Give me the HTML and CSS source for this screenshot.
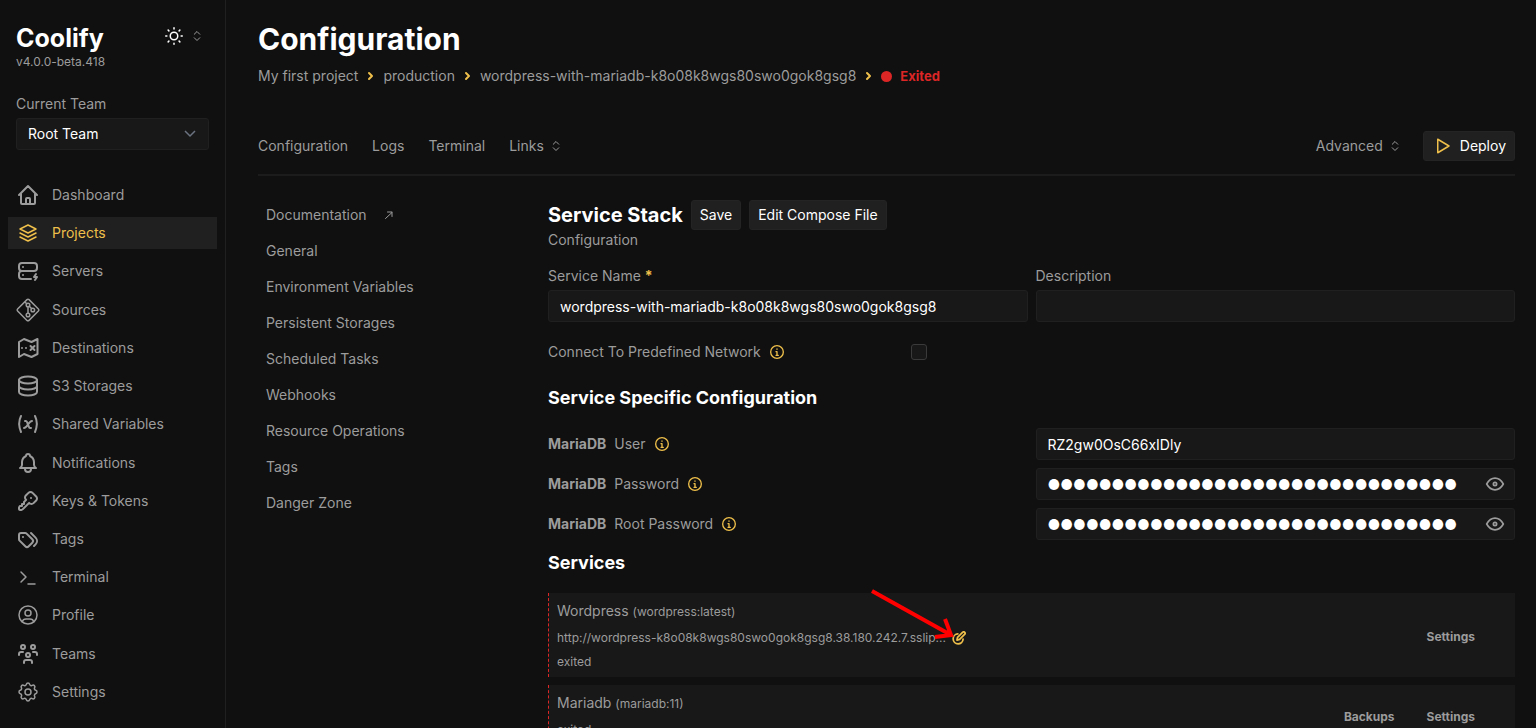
FILE: index.html
```
<!doctype html>
<html lang="en">
<head>
  <meta charset="UTF-8">
  <meta name="viewport" content="width=device-width, initial-scale=1.0">
  <title>Configuration | Coolify</title>
  <link rel="stylesheet" href="styles.css">
</head>
<body>

<svg class="sprite" aria-hidden="true">
  <symbol id="updown" viewBox="0 0 24 24"><path d="M6.500 15.500 12 21l5.500-5.500M6.500 8.500 12 3l5.500 5.500"/></symbol>
  <symbol id="info" viewBox="0 0 24 24"><circle cx="12" cy="12" r="9.500"/><path d="M12 7.500v.500M10.500 11.500H12V17M10.500 17h3.500"/></symbol>
  <symbol id="chevron" viewBox="0 0 9 10"><path d="M3 2 6 5 3 8"/></symbol>
  <symbol id="eye" viewBox="0 0 24 24"><circle cx="12" cy="12" r="2"/><path d="M22 12c-2.667 4.667-6 7-10 7s-7.333-2.333-10-7c2.667-4.667 6-7 10-7s7.333 2.333 10 7"/></symbol>
</svg>

<aside class="sidebar">
  <div class="sidebar-head">
    <div>
      <a href="#" class="brand">Coolify</a>
      <div class="version">v4.0.0-beta.418</div>
    </div>
    <button type="button" class="theme" aria-label="Theme">
      <svg class="icon icon-sun" viewBox="0 0 24 24"><circle cx="12" cy="12" r="5"/><path d="M12 1v1.500M12 21.500V23M1 12h1.500M21.500 12H23M4.200 4.200l1 1M18.800 18.800l1 1M4.200 19.800l1-1M18.800 5.200l1-1"/></svg>
      <svg class="icon icon-updown"><use href="#updown"/></svg>
    </button>
  </div>
  <label class="label" for="team">Current Team</label>
  <select class="select" id="team">
    <option>Root Team</option>
  </select>
  <nav class="menu">
    <a href="#" class="menu-item">
      <svg class="icon" viewBox="0 0 24 24"><path d="M3 12l2-2m0 0l7-7 7 7M5 10v10a1 1 0 001 1h3m10-11l2 2m-2-2v10a1 1 0 01-1 1h-3m-6 0a1 1 0 001-1v-4a1 1 0 011-1h2a1 1 0 011 1v4a1 1 0 001 1m-6 0h6"/></svg>
      Dashboard
    </a>
    <a href="#" class="menu-item is-active">
      <svg class="icon icon-thin" viewBox="0 0 24 24"><path d="M12 4L4 8l8 4l8-4zM4 12l8 4l8-4M4 16l8 4l8-4"/></svg>
      Projects
    </a>
    <a href="#" class="menu-item">
      <svg class="icon" viewBox="0 0 24 24"><path d="M3 7a3 3 0 0 1 3-3h12a3 3 0 0 1 3 3v2a3 3 0 0 1-3 3H6a3 3 0 0 1-3-3zM15 20H6a3 3 0 0 1-3-3v-2a3 3 0 0 1 3-3h12M7 8v.01M7 16v.01M20 15l-2 3h3l-2 3"/></svg>
      Servers
    </a>
    <a href="#" class="menu-item">
      <svg class="icon icon-thin" viewBox="0 0 24 24"><path d="M13 1.600l9.400 9.400a1.400 1.400 0 0 1 0 2L13 22.400a1.400 1.400 0 0 1-2 0L1.600 13a1.400 1.400 0 0 1 0-2L11 1.600a1.400 1.400 0 0 1 2 0zM12 9v6M9 4l1.700 1.700M13.300 8.300l2.200 2.200"/><circle cx="12" cy="7" r="1.800"/><circle cx="16.800" cy="12" r="1.800"/><circle cx="12" cy="17" r="1.800"/></svg>
      Sources
    </a>
    <a href="#" class="menu-item">
      <svg class="icon" viewBox="0 0 24 24"><path d="M3 6l5-3 7.500 3L21.500 3v15l-6 3L8 18l-5 3zM6 12v.01M10 12v.01M14.500 10l4 4M18.500 10l-4 4"/></svg>
      Destinations
    </a>
    <a href="#" class="menu-item">
      <svg class="icon" viewBox="0 0 24 24"><ellipse cx="12" cy="6" rx="9" ry="3.500"/><path d="M3 6v12c0 2 4 3.500 9 3.500s9-1.500 9-3.500V6M3 12c0 2 4 3.500 9 3.500s9-1.500 9-3.500"/></svg>
      S3 Storages
    </a>
    <a href="#" class="menu-item">
      <svg class="icon" viewBox="0 0 24 24"><path d="M5 4C2.500 9 2.500 14 5 20M19 4c2.500 5 2.500 10 0 16M9 9h1c1 0 1 1 2.016 3.527C13 15 13 16 14 16h1M8 16c1.500 0 3-2 4-3.500S14.500 9 16 9"/></svg>
      Shared Variables
    </a>
    <a href="#" class="menu-item">
      <svg class="icon" viewBox="0 0 24 24"><path d="M10 5a2 2 0 1 1 4 0a7 7 0 0 1 4 6v3a4 4 0 0 0 2 3H4a4 4 0 0 0 2-3v-3a7 7 0 0 1 4-6M9 17v1a3 3 0 0 0 6 0v-1"/></svg>
      Notifications
    </a>
    <a href="#" class="menu-item">
      <svg class="icon" viewBox="0 0 24 24"><path d="m16.555 3.843l3.602 3.602a2.877 2.877 0 0 1 0 4.069l-2.643 2.643a2.877 2.877 0 0 1-4.069 0l-.301-.301l-6.558 6.558a2 2 0 0 1-1.239.578L5.172 21H4a1 1 0 0 1-.993-.883L3 20v-1.172a2 2 0 0 1 .467-1.284l.119-.13L4 17h2v-2h2v-2l2.144-2.144l-.301-.301a2.877 2.877 0 0 1 0-4.069l2.643-2.643a2.877 2.877 0 0 1 4.069 0zM15 9h.01"/></svg>
      Keys &amp; Tokens
    </a>
    <a href="#" class="menu-item">
      <svg class="icon" viewBox="0 0 24 24"><path d="M3 8v4.172a2 2 0 0 0 .586 1.414l5.710 5.710a2.410 2.410 0 0 0 3.408 0l3.592-3.592a2.410 2.410 0 0 0 0-3.408l-5.710-5.710A2 2 0 0 0 9.172 6H5a2 2 0 0 0-2 2zM18 19l1.592-1.592a4.820 4.820 0 0 0 0-6.816L15 6M7 10h-.01"/></svg>
      Tags
    </a>
    <a href="#" class="menu-item">
      <svg class="icon icon-thin" viewBox="0 0 24 24"><path d="M5 7l5 5l-5 5M12 19h7"/></svg>
      Terminal
    </a>
    <a href="#" class="menu-item">
      <svg class="icon icon-thin" viewBox="0 0 24 24"><circle cx="12" cy="12" r="9"/><circle cx="12" cy="10" r="3"/><path d="M6.168 18.849A4 4 0 0 1 10 16h4a4 4 0 0 1 3.834 2.855"/></svg>
      Profile
    </a>
    <a href="#" class="menu-item">
      <svg class="icon" viewBox="0 0 24 24"><path d="M10 13a2 2 0 1 0 4 0a2 2 0 0 0-4 0m-2 8v-1a2 2 0 0 1 2-2h4a2 2 0 0 1 2 2v1M15 5a2 2 0 1 0 4 0a2 2 0 0 0-4 0m2 5h2a2 2 0 0 1 2 2v1M5 5a2 2 0 1 0 4 0a2 2 0 0 0-4 0m-2 8v-1a2 2 0 0 1 2-2h2"/></svg>
      Teams
    </a>
    <a href="#" class="menu-item">
      <svg class="icon icon-thin" viewBox="0 0 24 24"><path d="M10.325 4.317c.426-1.756 2.924-1.756 3.350 0a1.724 1.724 0 0 0 2.573 1.066c1.543-.940 3.310.826 2.370 2.370a1.724 1.724 0 0 0 1.065 2.572c1.756.426 1.756 2.924 0 3.350a1.724 1.724 0 0 0-1.066 2.573c.940 1.543-.826 3.310-2.370 2.370a1.724 1.724 0 0 0-2.572 1.065c-.426 1.756-2.924 1.756-3.350 0a1.724 1.724 0 0 0-2.573-1.066c-1.543.940-3.310-.826-2.370-2.370a1.724 1.724 0 0 0-1.065-2.572c-1.756-.426-1.756-2.924 0-3.350a1.724 1.724 0 0 0 1.066-2.573c-.940-1.543.826-3.310 2.370-2.370c1 .608 2.296.070 2.572-1.065z"/><circle cx="12" cy="12" r="3"/></svg>
      Settings
    </a>
  </nav>
</aside>

<main class="main">
  <h1 class="title">Configuration</h1>
  <nav class="breadcrumb" aria-label="Breadcrumb">
    <a href="#">My first project</a>
    <svg class="icon icon-chevron"><use href="#chevron"/></svg>
    <a href="#">production</a>
    <svg class="icon icon-chevron"><use href="#chevron"/></svg>
    <a href="#">wordpress-with-mariadb-k8o08k8wgs80swo0gok8gsg8</a>
    <svg class="icon icon-chevron"><use href="#chevron"/></svg>
    <span class="status">Exited</span>
  </nav>

  <div class="navbar">
    <nav class="tabs">
      <a href="#">Configuration</a>
      <a href="#">Logs</a>
      <a href="#">Terminal</a>
      <button type="button" class="dropdown">Links <svg class="icon icon-updown"><use href="#updown"/></svg></button>
    </nav>
    <div class="actions">
      <button type="button" class="dropdown">Advanced <svg class="icon icon-updown"><use href="#updown"/></svg></button>
      <button type="button" class="button button-deploy">
        <svg class="icon icon-play" viewBox="0 0 24 24"><path d="M5 3v18l15-9z"/></svg>
        Deploy
      </button>
    </div>
  </div>

  <div class="columns">
    <nav class="submenu">
      <a href="#" class="submenu-item">Documentation <svg class="icon icon-external" viewBox="0 0 12 12"><path d="M2.500 9.500l6.500-6M4.500 3H9v4.500"/></svg></a>
      <a href="#" class="submenu-item">General</a>
      <a href="#" class="submenu-item">Environment Variables</a>
      <a href="#" class="submenu-item">Persistent Storages</a>
      <a href="#" class="submenu-item">Scheduled Tasks</a>
      <a href="#" class="submenu-item">Webhooks</a>
      <a href="#" class="submenu-item">Resource Operations</a>
      <a href="#" class="submenu-item">Tags</a>
      <a href="#" class="submenu-item">Danger Zone</a>
    </nav>

    <form class="form">
      <div class="form-head">
        <h2 class="heading">Service Stack</h2>
        <button type="button" class="button">Save</button>
        <button type="button" class="button">Edit Compose File</button>
      </div>
      <div class="subtitle">Configuration</div>

      <div class="fields">
        <div>
          <label class="label" for="name">Service Name <span class="required">*</span></label>
          <input class="input" type="text" id="name" value="wordpress-with-mariadb-k8o08k8wgs80swo0gok8gsg8">
        </div>
        <div>
          <label class="label" for="description">Description</label>
          <input class="input" type="text" id="description">
        </div>
      </div>

      <div class="check">
        <label class="check-label" for="network">Connect To Predefined Network <svg class="icon icon-info"><use href="#info"/></svg></label>
        <input class="checkbox" type="checkbox" id="network">
      </div>

      <h3 class="subheading">Service Specific Configuration</h3>
      <div class="specific">
        <div class="specific-row">
          <label class="specific-label" for="db-user"><b>MariaDB</b> User <svg class="icon icon-info"><use href="#info"/></svg></label>
          <input class="input" type="text" id="db-user" value="RZ2gw0OsC66xIDly">
        </div>
        <div class="specific-row">
          <label class="specific-label" for="db-password"><b>MariaDB</b> Password <svg class="icon icon-info"><use href="#info"/></svg></label>
          <div class="secret">
            <input class="input input-secret" type="text" id="db-password" value="●●●●●●●●●●●●●●●●●●●●●●●●●●●●●●●●">
            <button type="button" class="reveal" aria-label="Show password"><svg class="icon icon-eye"><use href="#eye"/></svg></button>
          </div>
        </div>
        <div class="specific-row">
          <label class="specific-label" for="db-root"><b>MariaDB</b> Root Password <svg class="icon icon-info"><use href="#info"/></svg></label>
          <div class="secret">
            <input class="input input-secret" type="text" id="db-root" value="●●●●●●●●●●●●●●●●●●●●●●●●●●●●●●●●">
            <button type="button" class="reveal" aria-label="Show password"><svg class="icon icon-eye"><use href="#eye"/></svg></button>
          </div>
        </div>
      </div>

      <h3 class="subheading">Services</h3>
      <div class="services">
        <div class="service">
          <div class="service-info">
            <div class="service-name">Wordpress <small>(wordpress:latest)</small></div>
            <div class="service-url">
              http://wordpress-k8o08k8wgs80swo0gok8gsg8.38.180.242.7.sslip...
              <button type="button" class="edit" aria-label="Edit domains">
                <svg class="icon icon-edit" viewBox="0 0 24 24"><path d="M10 5a8.500 8.500 0 1 0 9 9M8.500 15.500l1-4.500L18.500 2a2.500 2.500 0 0 1 3.500 3.500L13 14.500z"/></svg>
              </button>
              <svg class="pointer" viewBox="0 0 90 56" aria-hidden="true"><path d="M4 5l79 44M77 33l6 16-16 2"/></svg>
            </div>
            <div class="service-status">exited</div>
          </div>
          <div class="service-links">
            <a href="#">Settings</a>
          </div>
        </div>
        <div class="service">
          <div class="service-info">
            <div class="service-name">Mariadb <small>(mariadb:11)</small></div>
            <div class="service-status">exited</div>
          </div>
          <div class="service-links">
            <a href="#">Backups</a>
            <a href="#">Settings</a>
          </div>
        </div>
      </div>
    </form>
  </div>
</main>

</body>
</html>
```
FILE: styles.css
```
:root {
  --base: #101010;
  --gray-100: #181818;
  --gray-200: #202020;
  --text: #9c9c9c;
  --warning: #eebf4a;
  --error: #dc2626;
}

* {
  box-sizing: border-box;
}

body {
  display: flex;
  height: 100vh;
  margin: 0;
  overflow: hidden;
  background-color: var(--base);
  color: var(--text);
  font-family: Inter, "Liberation Sans", sans-serif;
  font-size: 14px;
  line-height: 20px;
}

a {
  color: inherit;
  text-decoration: none;
}

h1,
h2,
h3 {
  margin: 0;
  color: white;
  font-weight: 700;
}

button,
input,
select {
  margin: 0;
  padding: 0;
  border: 0;
  background: none;
  color: inherit;
  font: inherit;
}

.sprite {
  display: none;
}

.icon {
  flex-shrink: 0;
  width: 24px;
  height: 24px;
  fill: none;
  stroke: currentcolor;
  stroke-width: 2;
  stroke-linecap: round;
  stroke-linejoin: round;
}

.icon-thin {
  stroke-width: 1.5;
}

.icon-updown {
  width: 12px;
  height: 12px;
}

.icon-sun {
  width: 18px;
  height: 18px;
  color: white;
}

.icon-chevron {
  width: 9px;
  height: 10px;
  color: var(--warning);
}

.icon-info {
  width: 16px;
  height: 16px;
  color: var(--warning);
}

.icon-play {
  width: 18px;
  height: 18px;
  color: var(--warning);
}

.icon-external {
  width: 12px;
  height: 12px;
  stroke-width: 1;
}

.icon-eye {
  width: 20px;
  height: 20px;
}

.icon-edit {
  width: 14px;
  height: 14px;
  stroke-width: 3;
}

/* sidebar */

.sidebar {
  display: flex;
  flex-direction: column;
  flex-shrink: 0;
  width: 226px;
  padding: 24px 16px 20px;
  border-right: 1px solid var(--gray-200);
}

.sidebar-head {
  display: flex;
  justify-content: space-between;
  margin-bottom: 22px;
}

.brand {
  color: white;
  font-size: 25px;
  font-weight: 700;
  line-height: 28px;
}

.version {
  font-size: 12px;
}

.theme {
  display: flex;
  align-items: center;
  gap: 8px;
  height: 24px;
  margin-right: 6px;
}

.label {
  display: block;
  margin-bottom: 4px;
}

.select {
  align-self: flex-start;
  width: 193px;
  height: 32px;
  padding: 0 11px;
  border: 1px solid var(--gray-200);
  border-radius: 3px;
  background: var(--gray-100) url("data:image/svg+xml,%3Csvg xmlns='http://www.w3.org/2000/svg' viewBox='0 0 12 8' fill='none' stroke='%236b7280' stroke-width='1.500'%3E%3Cpath d='M1 1l5 5 5-5'/%3E%3C/svg%3E") no-repeat right 12px center / 12px 8px;
  color: white;
  appearance: none;
}

.menu {
  display: flex;
  flex-direction: column;
  flex-grow: 1;
  justify-content: space-between;
  margin: 29px -8px 0;
}

.menu-item {
  display: flex;
  align-items: center;
  gap: 12px;
  height: 32px;
  padding: 0 8px;
}

.menu-item.is-active {
  background-color: var(--gray-200);
  color: var(--warning);
}

/* main */

.main {
  flex-grow: 1;
  min-width: 0;
  padding: 20px 21px 0 32px;
}

.title {
  font-size: 30px;
  line-height: 38px;
}

.breadcrumb {
  display: flex;
  align-items: center;
  gap: 8px;
  margin: 8px 0 45px;
}

.status {
  display: flex;
  align-items: center;
  gap: 8px;
  color: var(--error);
  font-size: 13px;
  font-weight: 700;
}

.status::before {
  width: 11px;
  height: 11px;
  border-radius: 50%;
  background-color: currentcolor;
  content: "";
}

.navbar {
  display: flex;
  align-items: center;
  justify-content: space-between;
  padding-bottom: 13px;
  border-bottom: 2px solid #1c1c1c;
}

.tabs {
  display: flex;
  align-items: center;
  gap: 24px;
}

.actions {
  display: flex;
  align-items: center;
  gap: 22px;
}

.dropdown {
  display: flex;
  align-items: center;
  gap: 6px;
}

.button {
  display: flex;
  align-items: center;
  gap: 8px;
  height: 30px;
  padding: 0 8px;
  border: 1px solid #242424;
  border-radius: 3px;
  background-color: var(--gray-200);
  color: white;
}

.button-deploy {
  padding-left: 10px;
}

.columns {
  display: flex;
  padding-top: 24px;
}

.submenu {
  display: flex;
  flex-direction: column;
  flex-shrink: 0;
  gap: 4px;
  width: 290px;
  margin-top: -1px;
  padding-left: 8px;
}

.submenu-item {
  display: flex;
  align-items: center;
  gap: 16px;
  height: 32px;
}

.form {
  flex-grow: 1;
  min-width: 0;
}

.form-head {
  display: flex;
  align-items: center;
  gap: 8px;
}

.heading {
  font-size: 20px;
  line-height: 28px;
}

.fields {
  display: grid;
  grid-template-columns: 1fr 1fr;
  gap: 8px;
  padding-top: 16px;
}

.required {
  color: var(--warning);
  font-weight: 700;
}

.input {
  width: 100%;
  height: 32px;
  padding: 0 11px;
  border: 1px solid var(--gray-200);
  border-radius: 3px;
  background-color: var(--gray-100);
  color: white;
}

.check {
  display: flex;
  align-items: center;
  justify-content: space-between;
  width: 379px;
  margin: 20px 0 22px;
}

.check-label,
.specific-label {
  display: flex;
  align-items: center;
  gap: 8px;
}

.checkbox {
  width: 16px;
  height: 16px;
  border: 1px solid #3a3a3a;
  border-radius: 3px;
  background-color: var(--gray-100);
  appearance: none;
}

.subheading {
  font-size: 18px;
  line-height: 28px;
}

.specific {
  display: grid;
  gap: 8px;
  padding: 16px 0 9px;
}

.specific-row {
  display: grid;
  grid-template-columns: 1fr 1fr;
  align-items: center;
  gap: 8px;
}

.secret {
  position: relative;
  display: flex;
}

.input-secret {
  padding-right: 40px;
}

.reveal {
  position: absolute;
  top: 0;
  right: 10px;
  display: flex;
  align-items: center;
  height: 32px;
}

.services {
  display: grid;
  gap: 8px;
  padding-top: 16px;
}

.service {
  display: flex;
  align-items: center;
  justify-content: space-between;
  padding: 8px 40px 5px 8px;
  border-left: 1px dashed var(--error);
  background-color: var(--gray-100);
}

.service-name {
  margin-bottom: 6px;
}

.service small,
.service-url,
.service-status {
  font-size: 12px;
}

.service-url {
  position: relative;
  display: flex;
  align-items: center;
  gap: 6px;
  margin-bottom: 4px;
}

.edit {
  display: flex;
  color: var(--warning);
}

/* arrow laid over the card, ends at the edit button */
.pointer {
  position: absolute;
  right: 8px;
  bottom: 6px;
  width: 90px;
  height: 56px;
  fill: none;
  stroke: red;
  stroke-width: 4;
}

.service-links {
  display: flex;
  gap: 32px;
  font-size: 12px;
  font-weight: 700;
}
```
